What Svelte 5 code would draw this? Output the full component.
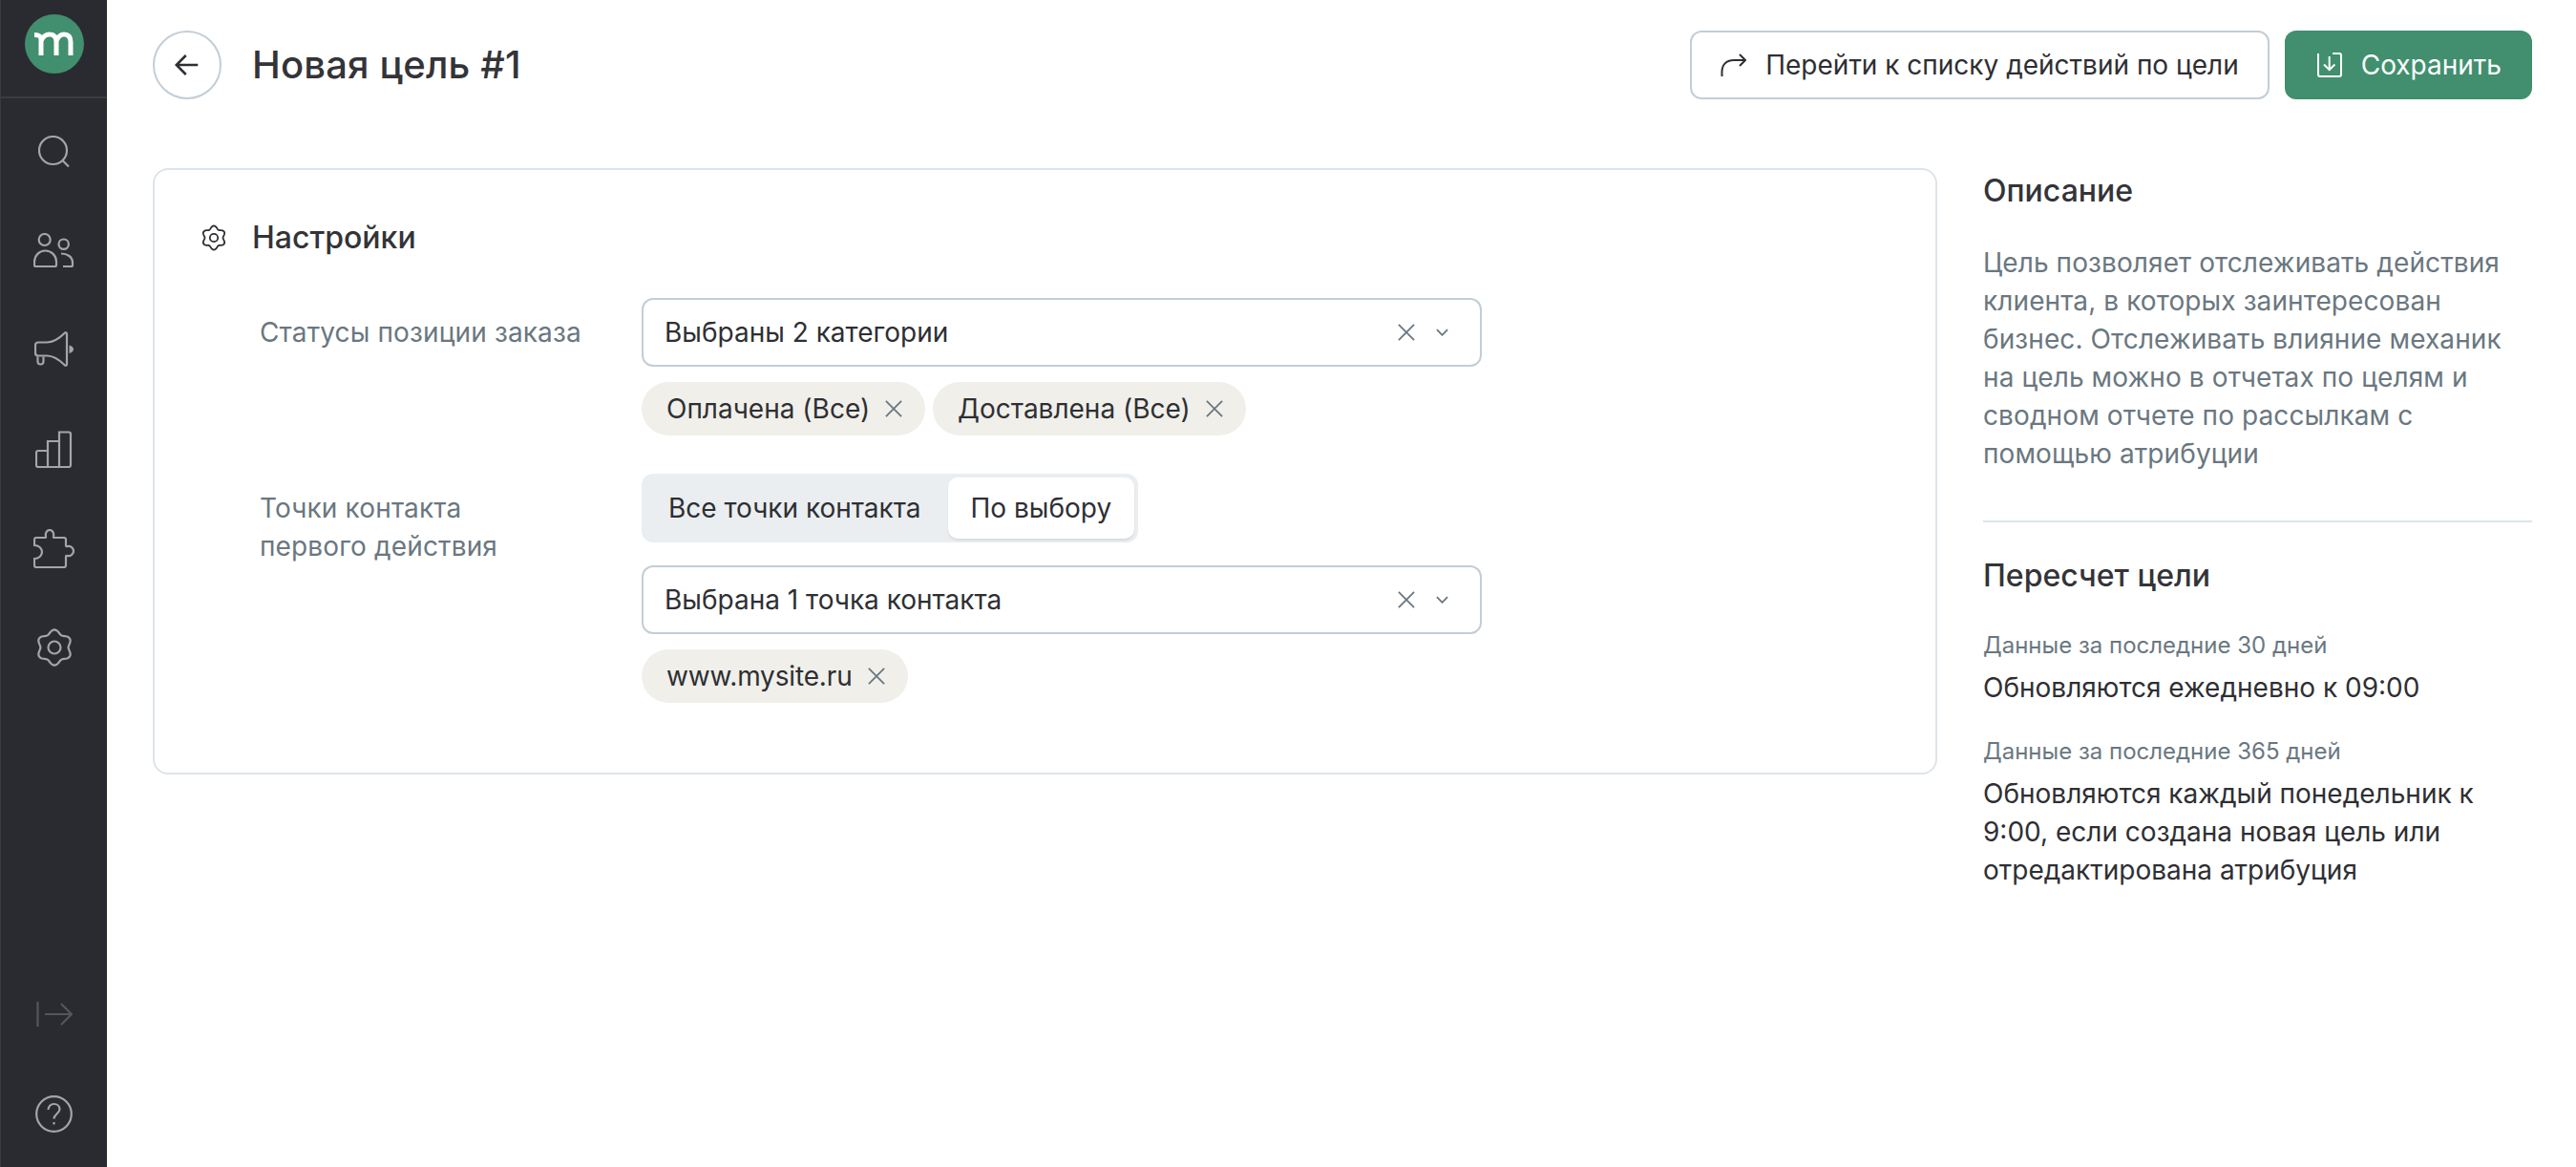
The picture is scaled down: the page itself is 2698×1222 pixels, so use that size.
<script>
	const chips = ['Оплачена (Все)', 'Доставлена (Все)'];

	// six-lobed gear outline around (c, c)
	function gear(c, base, wave) {
		const pts = [];
		for (let i = 0; i < 96; i++) {
			const t = (i / 96) * Math.PI * 2;
			const r = base + wave * Math.cos(6 * t);
			pts.push((c + r * Math.sin(t)).toFixed(2) + ' ' + (c - r * Math.cos(t)).toFixed(2));
		}
		return 'M' + pts.join('L') + 'z';
	}
</script>

<div class="page">
	<aside class="sidebar">
		<div class="logo-wrap">
			<svg class="logo" viewBox="0 0 62 62">
				<circle cx="31" cy="31" r="31" fill="#418f6e" />
				<path d="M10 21.500c5 0 7 1 7 5V43M17 28c2-5 5-7 9-7 5 0 7 3 7 8v14M33 28c2-5 4.500-7 8-7 5 0 7 3 7 8v14" fill="none" stroke="#fff" stroke-width="5" />
			</svg>
		</div>
		<nav class="nav">
			<div class="nav-item">
				<svg width="33" height="33" viewBox="0 0 33 33"><circle cx="15.500" cy="15.500" r="14.500" /><path d="M25.500 26l6.500 6.500" /></svg>
			</div>
			<div class="nav-item">
				<svg width="43" height="36" viewBox="0 0 43 36"><circle cx="11.700" cy="7" r="6" /><circle cx="31.700" cy="11.700" r="5.200" /><path d="M2.500 35A1.500 1.500 0 0 1 1 33.500V30a11.500 11.500 0 0 1 23 0v3.500a1.500 1.500 0 0 1-1.500 1.500z" /><path d="M29 21.500c6.500 0 12 3.500 12 9.500v3a1 1 0 0 1-1 1h-9" /></svg>
			</div>
			<div class="nav-item">
				<svg width="42" height="38" viewBox="0 0 42 38"><path d="M4 11.500h9c7 0 14-5 19-10 1-.8 2 0 2 1v32c0 1-1 1.800-2 1-5-5-12-10-19-10H4a3 3 0 0 1-3-3v-8a3 3 0 0 1 3-3z" /><path d="M3.500 26.500v5a3 3 0 0 0 6 0v-5" /><path class="solid" d="M36.500 14.500c3 1 4.500 2.500 4.500 4.200s-1.500 3.300-4.500 4.300z" /></svg>
			</div>
			<div class="nav-item">
				<svg width="39" height="39" viewBox="0 0 39 39"><path d="M3 21h10V11h12V1.500h10a2 2 0 0 1 2 2V36a2 2 0 0 1-2 2H3a2 2 0 0 1-2-2V23a2 2 0 0 1 2-2zM13 21v17M25 11v27" /></svg>
			</div>
			<div class="nav-item">
				<svg width="43" height="41" viewBox="0 0 43 41"><path d="M3 9h9c1 0 1.300-.6 1-1.500C12.200 4.500 14 1 17 1s4.800 3.500 4 6.500c-.3.900 0 1.500 1 1.500h10a2 2 0 0 1 2 2v6c0 1 .6 1.300 1.500 1 3-.8 6.500 1.500 6.500 5s-3.500 5.800-6.500 5c-.9-.3-1.500 0-1.500 1v9a2 2 0 0 1-2 2H3a2 2 0 0 1-2-2v-7c4.500 0 8-3 8-7s-3.500-7-8-7v-6a2 2 0 0 1 2-2z" /></svg>
			</div>
			<div class="nav-item">
				<svg width="40" height="40" viewBox="0 0 40 40"><path d={gear(20, 16.6, 2)} /><circle cx="20" cy="20" r="6.500" /></svg>
			</div>
		</nav>
		<div class="nav-bottom">
			<div class="nav-item dim">
				<svg width="38" height="26" viewBox="0 0 38 26"><path d="M1.500 0v26M9 13h28M26 2l11 11-11 11" /></svg>
			</div>
			<div class="nav-item">
				<svg width="39" height="39" viewBox="0 0 39 39"><circle cx="19.500" cy="19.500" r="18.300" /><path d="M13.500 15c0-3.500 2.700-6 6-6s6 2.300 6 5.500c0 4.500-6 5-6 10" /><path d="M19.500 28v2.500" /></svg>
			</div>
		</div>
	</aside>

	<main class="main">
		<header class="header">
			<div class="back">
				<svg viewBox="0 0 24 24"><path d="M21 12H3M11 4l-8 8 8 8" /></svg>
			</div>
			<h1>Новая цель #1</h1>
			<div class="actions">
				<button class="btn outline">
					<svg width="27" height="24" viewBox="0 0 27 24"><path d="M1.500 24v-5C1.500 11 7 7 14 7h12M20 1l6 6-6 6" /></svg>
					Перейти к списку действий по цели
				</button>
				<button class="btn primary">
					<svg width="26" height="26" viewBox="0 0 26 26"><path d="M1 1v22a2 2 0 0 0 2 2h20a2 2 0 0 0 2-2V3a2 2 0 0 0-2-2h-7M12.700 4v14M7 12.500l5.700 5.700 5.700-5.700" /></svg>
					Сохранить
				</button>
			</div>
		</header>

		<div class="content">
			<section class="card">
				<div class="card-title">
					<svg viewBox="0 0 28 28"><path d={gear(14, 11, 1.500)} /><circle cx="14" cy="14" r="4.200" /></svg>
					<h2>Настройки</h2>
				</div>

				<div class="row">
					<div class="label">Статусы позиции заказа</div>
					<div class="field">
						<div class="select">
							<span>Выбраны 2 категории</span>
							<svg class="x" viewBox="0 0 20 20"><path d="M1 1l18 18M19 1L1 19" /></svg>
							<svg class="chev" viewBox="0 0 14 8"><path d="M1 1l6 6 6-6" /></svg>
						</div>
						<div class="chips">
							{#each chips as chip}
								<div class="chip">
									{chip}
									<svg class="x" viewBox="0 0 20 20"><path d="M1 1l18 18M19 1L1 19" /></svg>
								</div>
							{/each}
						</div>
					</div>
				</div>

				<div class="row">
					<div class="label">Точки контакта<br />первого действия</div>
					<div class="field">
						<div class="segment">
							<div class="seg-item">Все точки контакта</div>
							<div class="seg-item active">По выбору</div>
						</div>
						<div class="select">
							<span>Выбрана 1 точка контакта</span>
							<svg class="x" viewBox="0 0 20 20"><path d="M1 1l18 18M19 1L1 19" /></svg>
							<svg class="chev" viewBox="0 0 14 8"><path d="M1 1l6 6 6-6" /></svg>
						</div>
						<div class="chips">
							<div class="chip narrow">
								www.mysite.ru
								<svg class="x" viewBox="0 0 20 20"><path d="M1 1l18 18M19 1L1 19" /></svg>
							</div>
						</div>
					</div>
				</div>
			</section>

			<aside class="info">
				<h3>Описание</h3>
				<p class="desc">
					Цель позволяет отслеживать действия клиента, в которых заинтересован бизнес. Отслеживать влияние механик на цель можно в отчетах по целям и сводном отчете по рассылкам с помощью атрибуции
				</p>
				<hr />
				<h3>Пересчет цели</h3>
				<div class="caption first">Данные за последние 30 дней</div>
				<p class="value">Обновляются ежедневно к 09:00</p>
				<div class="caption">Данные за последние 365 дней</div>
				<p class="value">Обновляются каждый понедельник к 9:00, если создана новая цель или отредактирована атрибуция</p>
			</aside>
		</div>
	</main>
</div>

<style>
	:global(body) {
		margin: 0;
		background: #fff;
	}

	.page {
		display: flex;
		height: 1222px;
		overflow: hidden;
		font-family: Inter, 'Noto Sans', sans-serif;
		font-size: 28px;
		line-height: 40px;
		color: #2e2f33;
	}

	.sidebar {
		display: flex;
		flex-direction: column;
		flex: 0 0 112px;
		box-sizing: border-box;
		height: 1222px;
		background: #2a2b30;
		border-left: 1px solid #3a3b40;
	}

	.logo-wrap {
		display: flex;
		justify-content: center;
		align-items: center;
		height: 103px;
		padding-bottom: 9px;
		box-sizing: border-box;
		border-bottom: 2px solid #3b3c41;
	}

	.logo {
		width: 62px;
		height: 62px;
	}

	.nav {
		display: flex;
		flex-direction: column;
		padding-top: 3px;
	}

	.nav-bottom {
		display: flex;
		flex-direction: column;
		margin-top: auto;
		padding-bottom: 4px;
	}

	.nav-item {
		display: flex;
		justify-content: center;
		align-items: center;
		height: 104px;
	}

	.nav-item svg {
		fill: none;
		stroke: #a3a5a8;
		stroke-width: 2.2;
	}

	.nav-item .solid {
		fill: #a3a5a8;
		stroke: none;
	}

	.nav-item.dim svg {
		stroke: #55565a;
	}

	.main {
		flex: 1;
		min-width: 0;
		padding: 32px 46px 0 48px;
	}

	.header {
		display: flex;
		align-items: center;
		height: 72px;
	}

	.back {
		display: flex;
		justify-content: center;
		align-items: center;
		box-sizing: border-box;
		width: 72px;
		height: 72px;
		border: 2px solid #c2ced6;
		border-radius: 50%;
	}

	.back svg {
		width: 30px;
		height: 30px;
		fill: none;
		stroke: #2e2f33;
		stroke-width: 2;
	}

	h1 {
		margin: 0 0 0 32px;
		font-size: 40px;
		font-weight: 500;
		line-height: 48px;
		letter-spacing: 0.15px;
		color: #333438;
	}

	.actions {
		display: flex;
		gap: 16px;
		margin-left: auto;
	}

	.btn {
		display: flex;
		align-items: center;
		gap: 20px;
		box-sizing: border-box;
		height: 72px;
		padding: 0 30px;
		border-radius: 12px;
		font: inherit;
		color: inherit;
	}

	.btn svg {
		fill: none;
		stroke: currentColor;
		stroke-width: 2;
	}

	.outline {
		background: #fff;
		border: 2px solid #c2ced6;
	}

	.primary {
		padding: 0 32px 0 34px;
		background: #418f6e;
		border: 0;
		color: #fff;
	}

	.content {
		display: flex;
		align-items: flex-start;
		gap: 48px;
		margin-top: 72px;
	}

	.card {
		flex: 0 0 1869px;
		box-sizing: border-box;
		height: 635px;
		padding: 48px 46px;
		border: 2px solid #dde5ea;
		border-radius: 16px;
	}

	.card-title {
		display: flex;
		align-items: center;
		gap: 26px;
		height: 46px;
	}

	.card-title svg {
		width: 28px;
		height: 28px;
		margin-left: 2px;
		fill: none;
		stroke: #2e2f33;
		stroke-width: 1.800;
	}

	h2,
	h3 {
		margin: 0;
		font-size: 32px;
		line-height: 44px;
		font-weight: 500;
		color: #333438;
	}

	.row {
		display: flex;
		margin-top: 40px;
	}

	.label {
		flex: 0 0 464px;
		box-sizing: border-box;
		padding: 16px 0 0 64px;
		color: #6a7780;
		letter-spacing: 0.14px;
	}

	.field {
		display: flex;
		flex-direction: column;
		gap: 16px;
		width: 880px;
	}

	.select {
		display: flex;
		align-items: center;
		box-sizing: border-box;
		height: 72px;
		padding: 0 25px 0 22px;
		border: 2px solid #c2ced6;
		border-radius: 12px;
	}

	.select span {
		flex: 1;
	}

	.x {
		width: 18px;
		height: 18px;
		fill: none;
		stroke: #6a7780;
		stroke-width: 2;
	}

	.chev {
		width: 13px;
		height: 8px;
		margin: 0 8px 0 22px;
		fill: none;
		stroke: #6a7780;
		stroke-width: 2;
	}

	.chips {
		display: flex;
		gap: 8px;
	}

	.chip {
		display: flex;
		align-items: center;
		gap: 16px;
		height: 56px;
		padding: 0 24px 0 26px;
		border-radius: 28px;
		background: #f0efea;
	}

	.chip.narrow {
		letter-spacing: -0.15px;
		padding-right: 24px;
	}

	.segment {
		display: flex;
		align-self: flex-start;
		box-sizing: border-box;
		height: 72px;
		margin-bottom: 8px;
		padding: 4px;
		border-radius: 12px;
		background: #ebeef0;
	}

	.seg-item {
		display: flex;
		align-items: center;
		padding: 0 28px 0 24px;
	}

	.seg-item.active {
		padding: 0 24px;
		background: #fff;
		border-radius: 10px;
		box-shadow: 0 2px 2px #d5dcdf;
	}

	.info {
		flex: 1;
		margin-top: 2px;
	}

	.desc {
		margin: 33px 0 0;
		color: #6a7780;
		letter-spacing: 0.1px;
	}

	hr {
		margin: 50px 0 34px;
		border: 0;
		border-top: 2px solid #dde5ea;
	}

	.caption {
		margin-top: 31px;
		font-size: 24px;
		line-height: 32px;
		color: #6a7780;
	}

	.caption.first {
		margin-top: 35px;
	}

	.value {
		margin: 8px 0 0;
	}
</style>
